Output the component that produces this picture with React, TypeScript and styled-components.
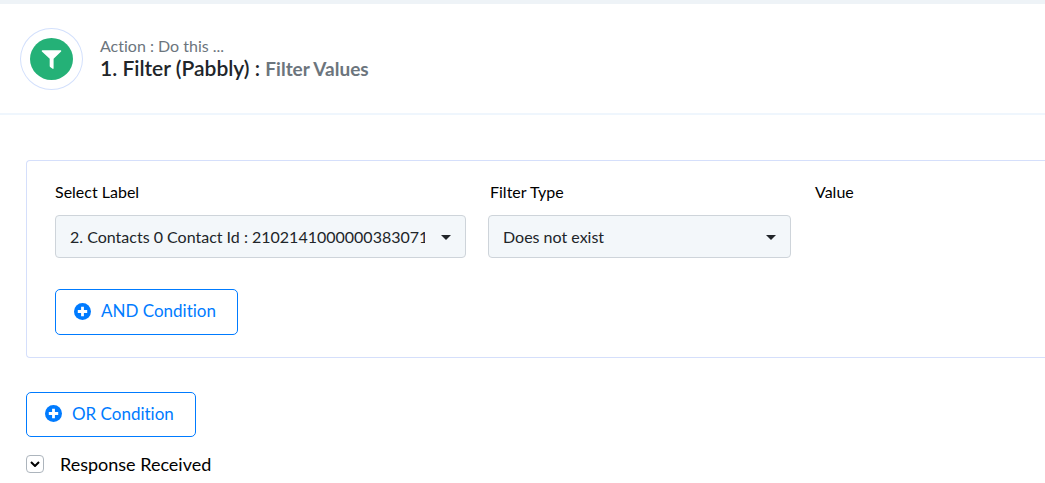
import React, { useState } from "react";
import styled, { createGlobalStyle } from "styled-components";

const GlobalStyle = createGlobalStyle`
  *, *::before, *::after { box-sizing: border-box; }
  body {
    margin: 0;
    background: #ffffff;
    color: #212529;
    font-family: Lato, "Open Sans", sans-serif;
    font-size: 16px;
    line-height: 24px;
    font-variant-ligatures: none;
  }
  button, select { font: inherit; font-variant-ligatures: none; }
`;

const Page = styled.main`
  border-top: 4px solid #eef3f7;
  overflow-x: hidden;
`;

const Header = styled.header`
  display: flex;
  align-items: center;
  gap: 17px;
  padding: 24px 20px 23px;
  border-bottom: 2px solid #eff6fd;
`;

const IconRing = styled.div`
  display: flex;
  flex: none;
  align-items: center;
  justify-content: center;
  width: 63px;
  height: 62px;
  border: 1px solid #d3e0fc;
  border-radius: 50%;
`;

const Heading = styled.div`
  padding-bottom: 4px;
`;

const Kicker = styled.p`
  margin: 0;
  color: #6c757d;
  line-height: 22px;
`;

const Title = styled.h1`
  margin: 0;
  font-size: 21px;
  font-weight: 600;
  line-height: 22px;
`;

const Subtitle = styled.span`
  color: #6c757d;
  font-size: 19px;
  font-weight: 700;
`;

const Content = styled.section`
  display: flex;
  flex-direction: column;
  align-items: flex-start;
  padding: 45px 0 0 26px;
`;

const Card = styled.div`
  align-self: stretch;
  margin-bottom: 34px;
  padding: 19px 0 22px 28px;
  border: 1px solid #d5dffb;
  border-right: 0;
  border-radius: 4px 0 0 4px;
`;

const Fields = styled.div`
  display: grid;
  grid-template-columns: 411fr 303fr 232fr;
  gap: 22px;
  margin-bottom: 31px;
`;

const Field = styled.div`
  min-width: 0;
`;

const Label = styled.label<{ $inset?: boolean }>`
  display: block;
  margin-bottom: 11px;
  padding-left: ${(p) => (p.$inset ? 2 : 0)}px;
  color: #000000;
`;

const SelectBox = styled.div`
  position: relative;
`;

const Select = styled.select`
  display: block;
  width: 100%;
  height: 43px;
  padding: 0 40px 0 14px;
  appearance: none;
  border: 1px solid #ced4da;
  border-radius: 4px;
  background: #f3f7fa;
  color: #212529;
`;

const Caret = styled.svg`
  position: absolute;
  top: 20px;
  right: 15px;
  pointer-events: none;
`;

const OutlineButton = styled.button<{ $tall?: boolean }>`
  display: inline-flex;
  align-items: center;
  gap: 10px;
  height: ${(p) => (p.$tall ? 46 : 45)}px;
  padding: 0 21px 2px 18px;
  border: 1px solid #007bff;
  border-radius: 5px;
  background: #ffffff;
  color: #007bff;
  font-size: 17px;
  cursor: pointer;
`;

const Toggle = styled.button`
  display: flex;
  align-items: center;
  gap: 16px;
  margin: 15px 0 6px;
  padding: 0;
  border: 0;
  background: none;
  color: #000000;
  font-size: 18px;
  cursor: pointer;
`;

const ToggleBox = styled.span`
  display: flex;
  align-items: center;
  justify-content: center;
  width: 18px;
  height: 18px;
  border: 1px solid #adb5bd;
  border-radius: 4px;
`;

const FilterIcon = () => (
  <svg width="43" height="42" viewBox="0 0 43 42" aria-hidden="true">
    <ellipse cx="21.5" cy="21" rx="21.5" ry="21" fill="#24b177" />
    <path
      d="M12.4 12.2h18.2c.7 0 .9.8.5 1.2l-7.5 7.3v9.6c0 .6-.6.8-1 .5l-2.5-1.9a1 1 0 0 1-.4-.8v-7.4l-7.8-7.3c-.4-.4-.2-1.2.5-1.2z"
      fill="#ffffff"
    />
  </svg>
);

const PlusIcon = () => (
  <svg width="17" height="17" viewBox="0 0 17 17" aria-hidden="true">
    <circle cx="8.5" cy="8.5" r="8.5" fill="#007bff" />
    <path d="M8.5 3.8v9.4M3.8 8.5h9.4" stroke="#ffffff" strokeWidth="2.8" />
  </svg>
);

interface DropDownProps {
  id: string;
  label: string;
  value: string;
  inset?: boolean;
}

const DropDown = ({ id, label, value, inset }: DropDownProps) => (
  <Field>
    <Label htmlFor={id} $inset={inset}>
      {label}
    </Label>
    <SelectBox>
      <Select id={id} defaultValue={value}>
        <option value={value}>{value}</option>
      </Select>
      <Caret width="10" height="5" viewBox="0 0 10 5" aria-hidden="true">
        <path d="M0 0h10L5 5z" fill="#212529" />
      </Caret>
    </SelectBox>
  </Field>
);

export default function App() {
  const [open, setOpen] = useState(false);

  return (
    <>
      <GlobalStyle />
      <Page>
        <Header>
          <IconRing>
            <FilterIcon />
          </IconRing>
          <Heading>
            <Kicker>Action : Do this ...</Kicker>
            <Title>
              1. Filter (Pabbly) : <Subtitle>Filter Values</Subtitle>
            </Title>
          </Heading>
        </Header>
        <Content>
          <Card>
            <Fields>
              <DropDown
                id="label"
                label="Select Label"
                value="2. Contacts 0 Contact Id : 2102141000000383071"
              />
              <DropDown id="type" label="Filter Type" value="Does not exist" inset />
              <Field>
                <Label as="span" $inset>
                  Value
                </Label>
              </Field>
            </Fields>
            <OutlineButton type="button" $tall>
              <PlusIcon />
              AND Condition
            </OutlineButton>
          </Card>
          <OutlineButton type="button">
            <PlusIcon />
            OR Condition
          </OutlineButton>
          <Toggle type="button" aria-expanded={open} onClick={() => setOpen(!open)}>
            <ToggleBox>
              <svg width="10" height="6" viewBox="0 0 10 6" aria-hidden="true">
                <path d="M1 1l4 4 4-4" fill="none" stroke="#000000" strokeWidth="2" />
              </svg>
            </ToggleBox>
            Response Received
          </Toggle>
        </Content>
      </Page>
    </>
  );
}
